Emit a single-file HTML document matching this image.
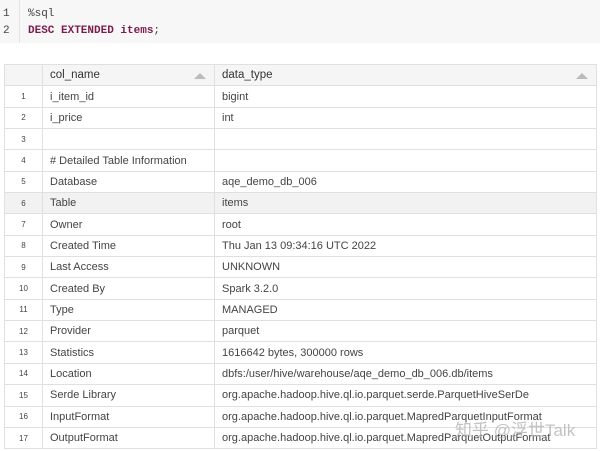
<!DOCTYPE html>
<html><head><meta charset="utf-8"><style>
body{margin:0;width:600px;height:451px;background:#fff;overflow:hidden;position:relative;font-family:"Liberation Sans",Arial,sans-serif;}
.code{position:absolute;left:0;top:0;width:600px;height:43px;background:#f7f7f7;font-family:"Liberation Mono",monospace;font-size:11px;}
.gut{position:absolute;left:0;top:0;width:19px;height:43px;border-right:1px solid #e4e4e4;}
.ln{position:absolute;left:3px;color:#444;}
.cl{position:absolute;left:28px;color:#444;}
.kw{color:#7a1d4e;font-weight:bold;}
table{position:absolute;left:4px;top:64px;border-collapse:collapse;width:593px;font-size:11px;color:#444;table-layout:fixed;}
td,th{border:1px solid #e0e0e0;height:20.35px;padding:0 0 0 7px;text-align:left;font-weight:normal;white-space:nowrap;overflow:hidden;}
th{background:#f5f5f5;color:#333;position:relative;font-size:11.5px;}
td.i{font-size:8px;text-align:center;padding:0;color:#444;}
tr.h td{background:#f2f2f2;}
.tri{position:absolute;right:8px;top:8px;width:0;height:0;border-left:6px solid transparent;border-right:6px solid transparent;border-bottom:6px solid #bbb;}
.wm{position:absolute;left:455px;top:416px;font-size:17px;color:rgba(180,180,180,0.8);font-family:"Liberation Sans","Noto Sans CJK SC",sans-serif;}
</style></head><body>
<div class="code"><div class="gut"></div>
<div class="ln" style="top:8px">1</div><div class="ln" style="top:25px">2</div>
<div class="cl" style="top:8px">%sql</div>
<div class="cl" style="top:25px"><span class="kw">DESC EXTENDED items</span>;</div>
</div>
<table>
<colgroup><col style="width:38px"><col style="width:172px"><col></colgroup>
<tr><th></th><th>col_name<span class="tri"></span></th><th>data_type<span class="tri"></span></th></tr>
<tr><td class="i">1</td><td>i_item_id</td><td>bigint</td></tr>
<tr><td class="i">2</td><td>i_price</td><td>int</td></tr>
<tr><td class="i">3</td><td></td><td></td></tr>
<tr><td class="i">4</td><td># Detailed Table Information</td><td></td></tr>
<tr><td class="i">5</td><td>Database</td><td>aqe_demo_db_006</td></tr>
<tr class="h"><td class="i">6</td><td>Table</td><td>items</td></tr>
<tr><td class="i">7</td><td>Owner</td><td>root</td></tr>
<tr><td class="i">8</td><td>Created Time</td><td>Thu Jan 13 09:34:16 UTC 2022</td></tr>
<tr><td class="i">9</td><td>Last Access</td><td>UNKNOWN</td></tr>
<tr><td class="i">10</td><td>Created By</td><td>Spark 3.2.0</td></tr>
<tr><td class="i">11</td><td>Type</td><td>MANAGED</td></tr>
<tr><td class="i">12</td><td>Provider</td><td>parquet</td></tr>
<tr><td class="i">13</td><td>Statistics</td><td>1616642 bytes, 300000 rows</td></tr>
<tr><td class="i">14</td><td>Location</td><td>dbfs:/user/hive/warehouse/aqe_demo_db_006.db/items</td></tr>
<tr><td class="i">15</td><td>Serde Library</td><td>org.apache.hadoop.hive.ql.io.parquet.serde.ParquetHiveSerDe</td></tr>
<tr><td class="i">16</td><td>InputFormat</td><td>org.apache.hadoop.hive.ql.io.parquet.MapredParquetInputFormat</td></tr>
<tr><td class="i">17</td><td>OutputFormat</td><td>org.apache.hadoop.hive.ql.io.parquet.MapredParquetOutputFormat</td></tr>
</table>
<div class="wm">知乎 @浮世Talk</div>
</body></html>
